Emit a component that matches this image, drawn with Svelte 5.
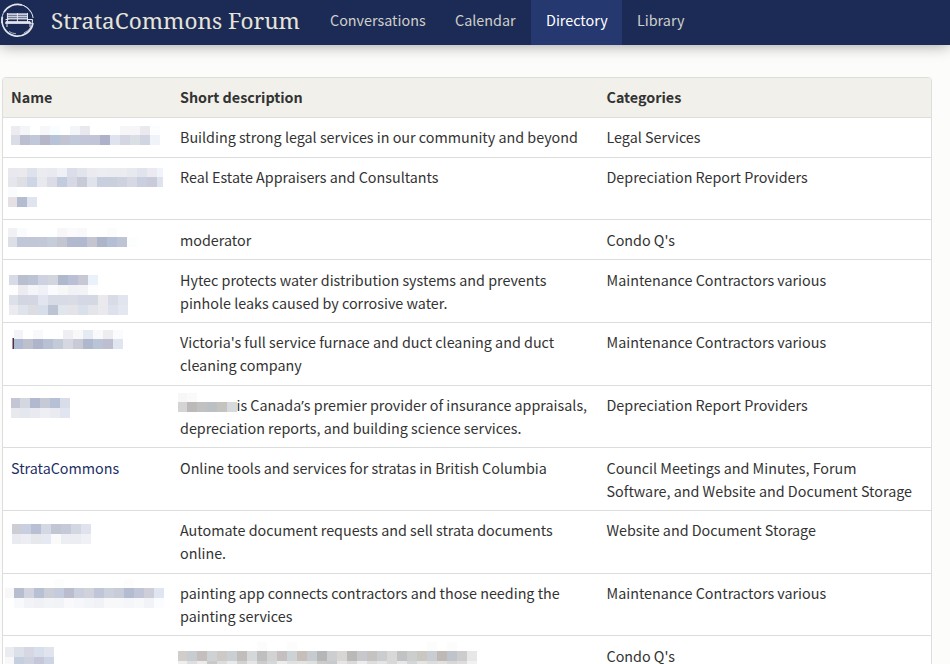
<script>
  const navigation = ['Conversations', 'Calendar', 'Directory', 'Library'];
  const current = 'Directory';

  // Each mosaic line is a height followed by its tile colours; "-" leaves a tile empty.
  const rows = [
    { h: 39.857, left: 8, top: 8.2, mosaic: [
      [9, 'ececf0 f4f5f8 - f7f7f9 f8fdff - f4f5f8 e8e8ee - - - f6f6f8 f6f6f8 eaeaee fcfdff'],
      [10, 'dadde6 bcbfd0 c1c8d9 b5b7c9 b6c3d8 c2c4d2 c1c8da c1c7d9 c1c5d7 adb2ca dfe3ed d4d6e2 dadee5 d1d5e1 f0f3fa']],
      desc: ['Building strong legal services in our community and beyond'], cat: ['Legal Services'] },
    { h: 62.714, left: 5, top: 10.4, mosaic: [
      [9, 'e8e9ee e9e9ee dde2ed ebecf0 e9eaef edf0f5 dbdee8 e1e4ed ebebef eaedf2 ebecef ebecef e6e9ee e0e4ed ebeaf0 f0f3fa'],
      [10, 'e5e6eb dedfe5 ced6e5 e8e9ee dbdce5 c1ccde d6d9e5 c8cad7 dfe3eb cacfdf cacfdd ced2df d6d9e4 c9cfde cacbda dee2ed'],
      [10, 'fafbfd'], [10, 'e5e0e4 b3bcd1 e0e4ee']], lastWidth: 6,
      desc: ['Real Estate Appraisers and Consultants'], cat: ['Depreciation Report Providers'] },
    { h: 39.857, left: 5, top: 7.6, mosaic: [
      [9, 'f1f1f3 fafbfd - - - f7f7f8 fbfbfd f9f9fb - - fcfcfc'],
      [10, 'dcdfe7 c0c7d9 c2c7d7 c2c8d7 c5ccda c3c6d1 b2b8ce afbad1 c4c5d0 adb5cb b4bfd5 bec4d6 fcfdff']],
      desc: ['moderator'], cat: ["Condo Q's"] },
    { h: 62.714, left: 6, top: 14.8, mosaic: [
      [10, 'd8dbe5 b8bfcf bcc3d5 ced2e0 d3d5de afb9ce babfd5 c8c8d5 e9f1fb'],
      [10, 'fdfdfd ececf0 f3f5f8 eff1f6 fafbfe f7f7f8 f0f2f6 f2f3f7 fdfdfe'],
      [10, 'dce0e8 d2d6e2 d4d7e3 e0e5f0 d7dbe5 d7dbe6 d9dce4 d3d8e4 d3d8e3 e9e9ee d9dce6 e1e5ed'],
      [10, 'ebeaef dfe3ec dcdde3 d6deea bcc3d2 e1e6ed e3e3e8 dae0eb e4e5eb e9e9ee dde1eb e3e7f0']],
      desc: ['Hytec protects water distribution systems and prevents', 'pinhole leaks caused by corrosive water.'], cat: ['Maintenance Contractors various'] },
    { h: 62.714, left: 11, top: 7.1, sliver: true, mosaic: [
      [9, 'f3f4f8 - f7f9fb - - eeeff3 f8f8f9 e6eaf2 f7f9fb edecf0 fafbfd'],
      [10, 'aebad3 bec0ce adb4cb b8c0d4 c3cbd9 d6d7e1 c8cad6 afb8cd b9c4d7 bdbfd0 e1e5ef']],
      desc: ["Victoria's full service furnace and duct cleaning and duct", 'cleaning company'], cat: ['Maintenance Contractors various'] },
    { h: 62.714, left: 8, top: 12.4, mosaic: [
      [10, 'c4c6d5 d4d7df b0b9d0 c5cad6 b6c0d7 d8dde9'],
      [10, 'e8e9ef e4e7ed e8eaf0 eeeff4 eaebf0 e0e5ef']],
      desc: ['is Canada’s premier provider of insurance appraisals,', 'depreciation reports, and building science services.'], cat: ['Depreciation Report Providers'],
      lead: [[9, 'f7f7f7 fafafa'], [10, 'd4d4d4 bcb9b9 c1c1c1 bbc0c5 c5c3bf d7dadd']] },
    { h: 62.714, name: 'StrataCommons', desc: ['Online tools and services for stratas in British Columbia'], cat: ['Council Meetings and Minutes, Forum', 'Software, and Website and Document Storage'] },
    { h: 62.714, left: 9, top: 13, mosaic: [
      [10, 'cccdd5 c7cfe0 b9bfd4 d3d8e3 c0c6d2 c5c9d8 d2d7e2 e0e3ed'],
      [10, 'eaebf0 eceef3 e6e8ec e5e9f1 fafafa edeef3 ecedf2 f0f1f6']],
      desc: ['Automate document requests and sell strata documents', 'online.'], cat: ['Website and Document Storage'] },
    { h: 62.714, left: 2, top: 5.2, mosaic: [
      [9, '- - - - - fdfdfe - - - - - - fdfdfe'],
      [10, 'f8f8f9 b7bed0 d1d3df b8c0d4 cbcdd7 c3cbdd bbbcce c9cfdc d0d2dc c0c6d8 cbd0dd c8ccd8 b4bcd1 c0c5d7 cdced7 dfe6f1'],
      [10, '- f8f9fc f2f3f6 eff1f5 f3f4f8 f2f3f7 f9f9fb f6f7fa f3f4f7 f0f2f6 f8f8fa f7f8fa f4f6fa f7f8fa f2f3f8 fbfcff']],
      desc: ['painting app connects contractors and those needing the', 'painting services'], cat: ['Maintenance Contractors various'] },
    { h: 39.857, left: 2, top: 10.5, mosaic: [
      [10, 'ebecf2 dbe0e9 d6d7e2 d7dfea e1e4ed'],
      [10, 'f8f8fa c6cfdf ced1df c6c8da cdd5e5']],
      desc: [''], cat: ["Condo Q's"],
      lead: [[9, '- - - - - - - - fcfcfc - - fcfcfc - - - - - - - - - - - - - fcfcfc - fcfcfc'],
        [10, 'd0cdca c8cccf c4bfbe cfd2d4 cdc9c6 cacfd3 c1bdbc d5d8d8 bfbfbf d2d2d2 c5c0bf cdd2d4 c7beb9 c6cbcf b5b6b7 cdced0 d7d6d5 bbb9b7 c6c8cb c4c3c2 cbccce dad8d6 c0c2c4 cbcecd cac6c1 c9cdd2 bfb9b5 bfc4ca cccccd e7e7e7'],
        [10, 'eeeeee dedede ebebeb c9c9c9 dcdcdc e9e9e9 d2d2d2 e5e5e5 cccccc d4d8da ececec e0e0e0 e3e3e3 dfdfdf cdcaca c7cacc e5e5e5 dadada ececec dddddd e4e4e4 d8d8d8 e7e7e7 d4d7d7 e4e4e4 dcdcdc e0e0e0 d7d7d7 dddddd f1f1f1']] }
  ];
</script>

{#snippet tiles(lines, lastWidth)}
  {#each lines as [height, colours]}
    <span class="tiles" style:height="{height}px">
      {#each colours.split(' ') as colour, i}
        <i style:width={i === 0 ? '9px' : i === 15 && lastWidth ? `${lastWidth}px` : '10px'}
          style:background={colour === '-' ? 'transparent' : `#${colour}`}></i>
      {/each}
    </span>
  {/each}
{/snippet}

<div class="page">
  <header>
    <div class="brand">
      <svg class="logo" viewBox="0 0 36 40" width="36" height="40" fill="none" stroke="#e3e5ec">
        <path d="M4 12.2A15.6 15.6 0 0 1 22 5M2.4 17A15.6 15.6 0 1 0 33 23" stroke-width="1.7" />
        <path d="M15 4.6A15.5 15.5 0 0 1 33.1 18M1.8 23C1 16 4 9.5 10 6.4" stroke-width="1" />
        <path d="M24 5.8a16 16 0 0 1 6.8 6.5M31.8 25.5a14 14 0 0 1-8 7.5M9 31.5q3 2 7 2.2" stroke-width=".7" />
        <path d="M7.5 14h20M7 16.3h21M7 18.6h21" stroke-width="1.75" stroke="#c9cedb" />
        <path d="M7.4 13v9M17.4 13v9M27.5 13v9" stroke-width="1" />
        <path d="M6 21.6h24l1.5 1.9H5.5z" fill="#e3e5ec" stroke-width=".8" />
        <path d="M5.5 19.5h3M28 19.5h4.5v2M7 23.5V27M30 23.5V27M32.3 20v5" stroke-width="1" />
      </svg>
      <span class="title">StrataCommons Forum</span>
    </div>
    <nav>
      {#each navigation as item}
        <a href="#{item}" class={item.toLowerCase()} class:active={item === current}><span>{item}</span></a>
      {/each}
    </nav>
  </header>
  <main>
    <div class="table">
      <div class="row head"><b>Name</b><b>Short description</b><b>Categories</b></div>
      {#each rows as row}
        <div class="row" style:height="{row.h}px">
          <div class="cell name" class:masked={row.mosaic}>
            {#if row.mosaic}
              <div style:padding="{row.top}px 0 0 {row.left}px">{@render tiles(row.mosaic, row.lastWidth)}</div>
              {#if row.sliver}<span class="sliver"></span>{/if}
            {:else}<a href="#stratacommons">{row.name}</a>{/if}
          </div>
          <div class="cell">
            {#each row.desc as line, i}
              <div class="line">{#if i === 0 && row.lead}<span class="lead" class:alone={!line}><span class="cover">{@render tiles(row.lead)}</span></span>{/if}{#each line.split('’') as part, j}{#if j > 0}<span class="apostrophe">’</span>{/if}{part}{/each}</div>
            {/each}
          </div>
          <div class="cell">{#each row.cat as line}<div class="line">{line}</div>{/each}</div>
        </div>
      {/each}
    </div>
  </main>
</div>

<style>
  :global(body) { margin: 0; background: #fcfcfa; }
  .page { height: 664px; overflow: hidden; display: flex; flex-direction: column; font-family: "Source Sans Pro", "Noto Sans CJK SC", sans-serif; font-size: 14.34px; line-height: 22.857px; color: #333; }
  header { display: flex; height: 45px; flex: none; background: #1c2b55; box-shadow: 0 0 16px rgba(0, 0, 0, .4); }
  .brand { display: flex; width: 315px; }
  .logo { flex: none; }
  .title { margin-left: 15px; font: 22.6px/42px "Source Serif Pro", "Noto Serif", "Liberation Serif", serif; color: #e6e3d9; white-space: nowrap; }
  nav { display: flex; font-size: 14.36px; }
  nav a { padding: 9px 15px 0; color: #cfcfcb; text-decoration: none; box-sizing: border-box; white-space: nowrap; }
  .conversations { width: 125px; }
  .calendar { width: 91px; }
  .directory { width: 91px; }
  nav .active { background: #263870; color: #fff; }
  main { padding: 32px 0 0 2px; }
  .table { width: 928px; border: 1px solid #dcdddd; border-radius: 4px 4px 0 0; background: #fff; overflow: hidden; }
  .row { display: grid; grid-template-columns: 169px 426.5px 1fr; box-sizing: border-box; border-top: 1px solid #dcdddd; }
  .head { height: 38.75px; border-top: 0; background: #f1f0eb; }
  .head b { padding: 8px 8px 0; }
  .cell { padding: 8.4px 0 0 8px; }
  .line { height: 23px; white-space: nowrap; }
  .name { position: relative; }
  .masked { padding: 0; }
  .name a { color: #1c2f66; text-decoration: none; }
  .apostrophe { font-family: "Noto Sans", sans-serif; line-height: 0; }
  .tiles { display: flex; }
  .tiles i { flex: none; }
  .sliver { position: absolute; left: 9px; top: 15px; width: 2px; height: 11px; background: linear-gradient(90deg, #d48a70 50%, #263f66 50%); }
  .lead { position: relative; display: inline-block; width: 56.5px; height: 12px; }
  .cover { position: absolute; left: -2px; top: -6px; }
  .alone .cover { top: -8px; }
</style>
